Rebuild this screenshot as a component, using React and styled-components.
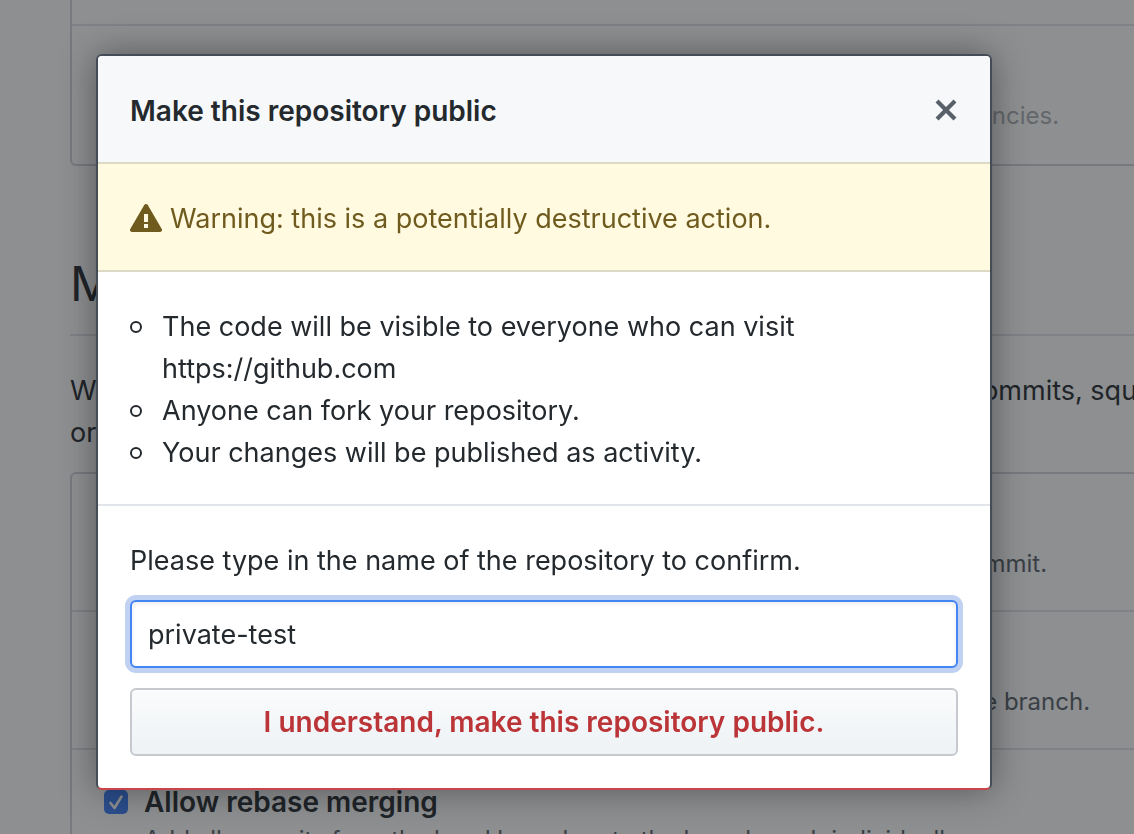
import React, { useState } from "react";
import styled, { createGlobalStyle } from "styled-components";

const GlobalStyle = createGlobalStyle`
  *, *::before, *::after { box-sizing: border-box; }
  body {
    margin: 0;
    overflow: hidden;
    background: #fff;
    color: #24292e;
    font-family: Inter, "Liberation Sans", sans-serif;
    font-size: 27px;
    line-height: 42px;
  }
`;

const Page = styled.main`
  height: 100vh;
  overflow: hidden;
  padding-left: 70px;
`;

const Settings = styled.div`
  margin-right: -116px;
`;

const Box = styled.section`
  border: 2px solid #d1d5da;
  border-radius: 6px;
  ${(p) => p.$continued && "border-top: 0; border-top-left-radius: 0; border-top-right-radius: 0;"}
`;

const Spacer = styled.div`
  height: 24px;
`;

const Row = styled.div`
  display: flex;
  gap: 16px;
  padding: 30px 32px 28px;
  & + & { border-top: 2px solid #e1e4e8; }
  ${Spacer} + & { border-top: 2px solid #e1e4e8; padding-bottom: 30px; }
`;

const RowTitle = styled.label`
  display: block;
  padding-top: 2px;
  font-size: 28px;
  line-height: 40px;
  font-weight: 600;
  color: ${(p) => (p.$muted ? "#acb0b4" : "#24292e")};
`;

const RowNote = styled.p`
  margin: 0;
  font-size: 24px;
  line-height: 36px;
  white-space: nowrap;
  color: ${(p) => (p.$muted ? "#acb0b4" : "#586069")};
`;

const CheckWrap = styled.span`
  display: grid;
  width: 24px;
  height: 24px;
  margin-top: 10px;
  flex: none;
  & > * { grid-area: 1 / 1; }
  svg { width: 24px; height: 24px; pointer-events: none; }
`;

const Check = styled.input`
  appearance: none;
  width: 24px;
  height: 24px;
  margin: 0;
  border-radius: 5px;
  background: #3b7cf5;
  &:disabled { background: #d1d5da; }
`;

const Heading = styled.h2`
  margin: 80px 0 34px;
  padding: 2px 0 14px;
  border-bottom: 2px solid #e1e4e8;
  font-size: 48px;
  line-height: 72px;
  font-weight: 400;
`;

const Intro = styled.p`
  margin: 0 0 18px;
`;

const Overlay = styled.div`
  position: fixed;
  inset: 0;
  padding: 54px 96px;
  background: rgba(27, 31, 35, 0.5);
`;

const Dialog = styled.div`
  max-width: 896px;
  border: 2px solid #444d56;
  border-bottom-color: #c9444b;
  border-radius: 6px;
  background: #fff;
  box-shadow: 0 0 36px rgba(0, 0, 0, 0.4);
  overflow: hidden;
`;

const DialogHeader = styled.header`
  display: flex;
  align-items: center;
  justify-content: space-between;
  padding: 34px 32px 30px;
  background: #f6f8fa;
`;

const DialogTitle = styled.h1`
  margin: 0;
  font-size: 28px;
  line-height: 42px;
  font-weight: 600;
`;

const CloseButton = styled.button`
  display: flex;
  padding: 0 0 2px;
  border: 0;
  background: none;
  color: #586069;
  cursor: pointer;
`;

const Warning = styled.div`
  display: flex;
  align-items: center;
  gap: 8px;
  padding: 34px 32px 30px;
  border: solid #dcd9c4;
  border-width: 2px 0;
  background: #fffae0;
  color: #705b1f;
  svg { margin-bottom: 2px; }
`;

const Effects = styled.ul`
  margin: 0;
  padding: 34px 32px 30px;
  list-style: none;
  border-bottom: 2px solid #e1e4e8;
`;

const Effect = styled.li`
  display: flex;
  gap: 20px;
  &::before {
    content: "";
    flex: none;
    width: 12px;
    height: 12px;
    margin-top: 15px;
    border: 2px solid #24292e;
    border-radius: 50%;
  }
`;

const ConfirmForm = styled.form`
  display: flex;
  flex-direction: column;
  padding: 34px 32px 32px;
`;

const NameLabel = styled.label`
  margin-bottom: 18px;
`;

const NameInput = styled.input`
  width: 100%;
  height: 68px;
  margin-bottom: 20px;
  padding: 0 16px;
  border: 2px solid #4285f4;
  border-radius: 6px;
  outline: 0;
  background: #fff;
  color: #24292e;
  font: inherit;
  box-shadow: inset 0 2px 4px rgba(27, 31, 35, 0.08), 0 0 0 5px #c0d1f2;
`;

const DangerButton = styled.button`
  height: 68px;
  padding: 0 24px;
  border: 2px solid #c6c9cd;
  border-radius: 6px;
  background: linear-gradient(#fafbfc, #eff3f6 90%);
  color: #bb3538;
  font: inherit;
  font-size: 28px;
  font-weight: 600;
  cursor: pointer;
`;

const AlertIcon = () => (
  <svg width="32" height="32" viewBox="0 0 16 16" fill="currentColor" aria-hidden="true">
    <path
      fillRule="evenodd"
      d="M8.893 1.5c-.183-.31-.52-.5-.887-.5s-.703.19-.886.5L.138 13.499a.98.98 0 0 0 0 1.001c.193.31.53.501.886.501h13.964c.367 0 .704-.19.877-.5a1.03 1.03 0 0 0 .01-1.002L8.893 1.5zm.133 11.497H6.987v-2.003h2.039v2.003zm0-3.004H6.987V5.987h2.039v4.006z"
    />
  </svg>
);

const CloseIcon = () => (
  <svg width="24" height="32" viewBox="0 0 12 16" fill="currentColor" aria-hidden="true">
    <path
      fillRule="evenodd"
      d="M7.48 8l3.75 3.75-1.48 1.48L6 9.48l-3.75 3.75-1.48-1.48L4.52 8 .77 4.25l1.48-1.48L6 6.52l3.75-3.75 1.48 1.48L7.48 8z"
    />
  </svg>
);

function Option({ id, title, note, muted, checked }) {
  return (
    <Row>
      <CheckWrap>
        <Check type="checkbox" id={id} defaultChecked={checked} disabled={muted} />
        {checked && (
          <svg viewBox="0 0 24 24" fill="none" stroke="#fff" strokeWidth="2.6" strokeLinecap="round" strokeLinejoin="round" aria-hidden="true">
            <path d="M6.5 13l4 5L17.5 6.5" />
          </svg>
        )}
      </CheckWrap>
      <div>
        <RowTitle htmlFor={id} $muted={muted}>{title}</RowTitle>
        <RowNote $muted={muted}>{note}</RowNote>
      </div>
    </Row>
  );
}

const mergeOptions = [
  ["merge", "Allow merge commits", "Add all commits from the head branch to the base branch with a merge commit."],
  ["squash", "Allow squash merging", "Combine all commits from the head branch into a single commit in the base branch."],
  ["rebase", "Allow rebase merging", "Add all commits from the head branch onto the base branch individually."],
];

const effects = [
  "The code will be visible to everyone who can visit https://github.com",
  "Anyone can fork your repository.",
  "Your changes will be published as activity.",
];

export default function App() {
  const [name, setName] = useState("private-test");
  return (
    <>
      <GlobalStyle />
      <Page>
        <Settings>
          <Box $continued>
            <Spacer />
            <Option
              id="alerts"
              title="Vulnerability alerts"
              note="We will notify you when we discover a vulnerability in one of your dependencies."
              muted
            />
          </Box>
          <Heading>Merge button</Heading>
          <Intro>
            When merging pull requests, you can allow any combination of merge commits, squashing, or rebasing.
          </Intro>
          <Box>
            {mergeOptions.map(([id, title, note]) => (
              <Option key={id} id={id} title={title} note={note} checked />
            ))}
          </Box>
        </Settings>
      </Page>
      <Overlay>
        <Dialog role="dialog" aria-modal="true" aria-labelledby="dialog-title">
          <DialogHeader>
            <DialogTitle id="dialog-title">Make this repository public</DialogTitle>
            <CloseButton type="button" aria-label="Close dialog">
              <CloseIcon />
            </CloseButton>
          </DialogHeader>
          <Warning>
            <AlertIcon />
            <span>Warning: this is a potentially destructive action.</span>
          </Warning>
          <Effects>
            {effects.map((text) => (
              <Effect key={text}>{text}</Effect>
            ))}
          </Effects>
          <ConfirmForm onSubmit={(e) => e.preventDefault()}>
            <NameLabel htmlFor="repo-name">Please type in the name of the repository to confirm.</NameLabel>
            <NameInput
              id="repo-name"
              type="text"
              autoComplete="off"
              value={name}
              onChange={(e) => setName(e.target.value)}
            />
            <DangerButton type="submit">I understand, make this repository public.</DangerButton>
          </ConfirmForm>
        </Dialog>
      </Overlay>
    </>
  );
}
